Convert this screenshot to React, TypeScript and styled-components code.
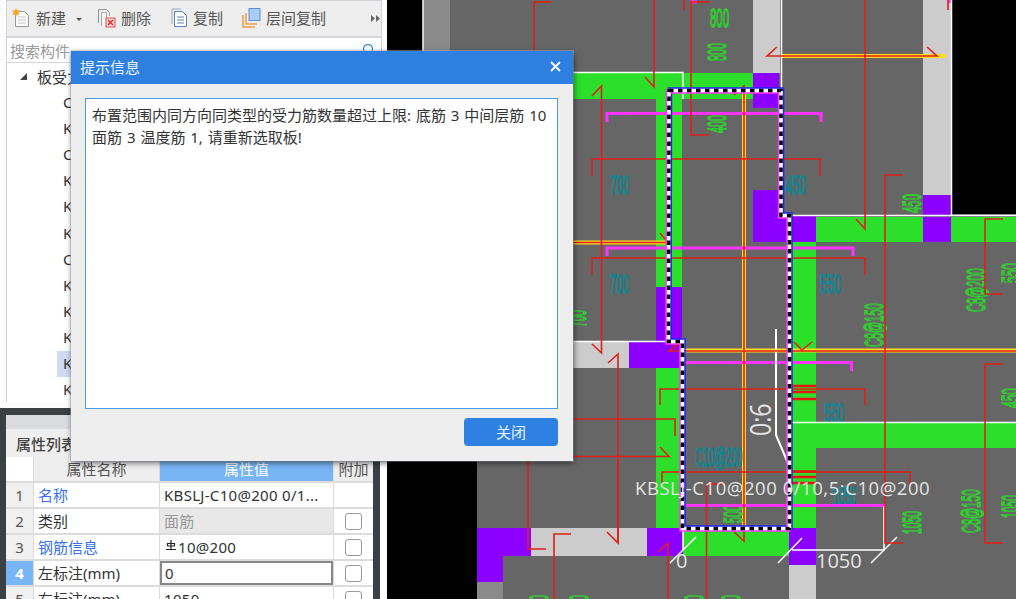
import React from "react";
import styled, { createGlobalStyle } from "styled-components";

const Global = createGlobalStyle`
  html, body { margin: 0; padding: 0; background: #000; }
  body { font-family: "Noto Sans", "Noto Sans CJK SC", sans-serif; font-size: 15px; color: #333; }
`;

const Page = styled.div`
  position: relative;
  display: flex;
  width: 1016px;
  height: 599px;
  overflow: hidden;
`;

const Side = styled.div`
  display: flex;
  flex-direction: column;
  width: 387px;
  flex: none;
  background: #fdfdfd;
`;

const ListPanel = styled.section`
  display: flex;
  flex-direction: column;
  height: 402px;
  margin: 0 5px 6px 6px;
  border: 1px solid #cfd2d6;
  border-bottom: 0;
  box-sizing: border-box;
  background: #fff;
  overflow: hidden;
`;

const Toolbar = styled.div`
  display: flex;
  align-items: center;
  height: 37px;
  flex: none;
  padding-left: 5px;
  background: #eeeeee;
  border-bottom: 2px solid #d3d5d8;
  box-sizing: border-box;
`;

const ToolButton = styled.div<{ $w: number }>`
  display: flex;
  align-items: center;
  gap: 5px;
  width: ${(p) => p.$w}px;
  flex: none;
  color: #555;
  white-space: nowrap;
  padding-bottom: 2px;
  box-sizing: border-box;
`;

const Caret = styled.span`
  width: 0;
  height: 0;
  margin-left: 5px;
  margin-top: 3px;
  border-left: 3.5px solid transparent;
  border-right: 3.5px solid transparent;
  border-top: 3.5px solid #555;
`;

const More = styled.svg`
  display: block;
  margin-left: auto;
  margin-right: 1px;
  flex: none;
`;

const SearchRow = styled.div`
  display: flex;
  align-items: center;
  justify-content: space-between;
  height: 24px;
  flex: none;
  padding: 0 6px 0 3px;
  border-bottom: 1px solid #d3d5d8;
  color: #9a9a9a;
`;

const Tree = styled.div`
  display: flex;
  flex-direction: column;
  padding-top: 1px;
`;

const TreeRoot = styled.div`
  display: flex;
  align-items: center;
  height: 26px;
  padding: 0 0 2px 13px;
  box-sizing: border-box;
  gap: 10px;
  color: #333;
  white-space: nowrap;
`;

const Triangle = styled.span`
  width: 0;
  height: 0;
  border-bottom: 7px solid #444;
  border-left: 7px solid transparent;
`;

const TreeItem = styled.div<{ $sel?: boolean }>`
  display: flex;
  align-items: center;
  height: 26.1px;
  margin-left: 50px;
  padding: 0 0 2px 6px;
  box-sizing: border-box;
  color: #333;
  background: ${(p) => (p.$sel ? "#cddcf0" : "transparent")};
`;

const PropPanel = styled.section`
  flex: 1;
  display: flex;
  flex-direction: column;
  margin-right: 7px;
  border: solid #3b4043;
  border-width: 7px 7px 0 6px;
  background: #fff;
  overflow: hidden;
  min-height: 0;
`;

const Grip = styled.div`
  height: 14px;
  flex: none;
  background: #d9dbdd;
`;

const TabBar = styled.div`
  display: flex;
  align-items: center;
  height: 28px;
  flex: none;
  padding-left: 10px;
  background: #eeeeee;
  font-weight: 500;
  color: #444;
`;

const Table = styled.div`
  display: grid;
  grid-template-columns: 27px 125px 173px 39px;
  grid-auto-rows: 24px;
  column-gap: 1px;
  row-gap: 2px;
  background: #dcdcdc;
`;

const Blank = styled.div`
  background: #fff;
`;

const Head = styled.div<{ $active?: boolean }>`
  display: flex;
  align-items: center;
  justify-content: center;
  overflow: hidden;
  white-space: nowrap;
  padding-bottom: 1px;
  box-sizing: border-box;
  background: ${(p) => (p.$active ? "#78b5f5" : "#eeeeee")};
  color: ${(p) => (p.$active ? "#fff" : "#555")};
`;

const Num = styled.div<{ $active?: boolean }>`
  display: flex;
  align-items: center;
  justify-content: center;
  padding-bottom: 1px;
  box-sizing: border-box;
  background: ${(p) => (p.$active ? "#78b5f5" : "#f0f0f0")};
  color: ${(p) => (p.$active ? "#fff" : "#555")};
  font-weight: ${(p) => (p.$active ? 700 : 400)};
`;

const NameCell = styled.div<{ $link?: boolean }>`
  display: flex;
  align-items: center;
  padding: 0 0 1px 4px;
  box-sizing: border-box;
  background: #fff;
  color: ${(p) => (p.$link ? "#3a6ff0" : "#333")};
`;

const ValueCell = styled.div<{ $ro?: boolean; $focus?: boolean }>`
  display: flex;
  align-items: center;
  padding: 0 0 1px ${(p) => (p.$focus ? 3 : 4)}px;
  box-sizing: border-box;
  overflow: hidden;
  white-space: nowrap;
  letter-spacing: 0.3px;
  background: ${(p) => (p.$ro ? "#e8e8e8" : "#fff")};
  color: ${(p) => (p.$ro ? "#999" : "#333")};
  border: ${(p) => (p.$focus ? "2px solid #888" : "0")};
`;

const RebarMark = styled.svg`
  display: block;
  flex: none;
  margin: -3px 1px 0 1px;
`;

const CheckCell = styled.div`
  display: flex;
  align-items: center;
  justify-content: center;
  background: #fff;
`;

const Check = styled.span`
  width: 15px;
  height: 15px;
  border: 1px solid #999;
  border-radius: 3px;
  background: #fff;
`;

const Canvas = styled.svg`
  display: block;
  flex: none;
  width: 629px;
  height: 599px;
  background: #666;
`;

const Fill = styled.rect<{ $c: string }>`
  fill: ${(p) => p.$c};
`;

const Wire = styled.path<{ $c: string; $w?: number }>`
  fill: none;
  stroke: ${(p) => p.$c};
  stroke-width: ${(p) => p.$w ?? 2}px;
`;

const CadText = styled.text<{ $c: string }>`
  font-family: "Liberation Sans", sans-serif;
  font-size: 26px;
  fill: none;
  stroke: ${(p) => p.$c};
  stroke-width: 1px;
  vector-effect: non-scaling-stroke;
`;

const Label = styled.text<{ $size: number }>`
  font-family: "Open Sans", "Liberation Sans", sans-serif;
  font-size: ${(p) => p.$size}px;
  fill: #e4e4e4;
`;

const Dialog = styled.div`
  position: absolute;
  left: 71px;
  top: 51px;
  width: 502px;
  height: 410px;
  display: flex;
  flex-direction: column;
  background: #eeeeee;
  box-shadow: 1px 2px 6px rgba(0, 0, 0, 0.55), 0 0 0 1px rgba(190, 200, 220, 0.5);
`;

const DialogTitle = styled.div`
  display: flex;
  align-items: center;
  justify-content: space-between;
  height: 33px;
  flex: none;
  padding: 0 12px 2px 9px;
  box-sizing: border-box;
  background: #2e7fe0;
  color: #eaf2fc;
`;

const MessageBox = styled.div`
  height: 311px;
  margin: 14px 15px 0 14px;
  padding: 5px 6px;
  box-sizing: border-box;
  background: #fff;
  border: 1px solid #4a9be0;
  line-height: 22px;
  word-spacing: 1px;
  color: #333;
`;

const DialogFoot = styled.div`
  display: flex;
  justify-content: flex-end;
  padding: 9px 15px 0 0;
`;

const CloseBtn = styled.div`
  display: flex;
  align-items: center;
  justify-content: center;
  width: 94px;
  height: 28px;
  padding-bottom: 1px;
  box-sizing: border-box;
  border-radius: 4px;
  background: #2e81e3;
  color: #e8f1fc;
`;

const NewIcon = () => (
  <svg width="19" height="20" viewBox="0 0 19 20">
    <path d="M3.5 3.5h9l4 4v11h-13z" fill="#fbfbfb" stroke="#9a9a9a" />
    <path d="M6 9h8M6 12h8M6 15h8" stroke="#c8c8c8" />
    <path d="M4 0l1 2.5 2.5-.5-1 2.500 1 2.500-2.500-.5-1 2.500-1-2.500-2.500.5 1-2.500-1-2.500 2.500.5z" fill="#f5a623" />
  </svg>
);
const DeleteIcon = () => (
  <svg width="19" height="20" viewBox="0 0 19 20">
    <path d="M1.500 15V1.500h8l3 3V8" fill="none" stroke="#9a9a9a" />
    <path d="M4.500 18V4.500h5v13" fill="#f6f6f6" stroke="#a8a8a8" />
    <rect x="9" y="10" width="9" height="9" fill="#f3d9d6" stroke="#d9534f" />
    <path d="M11 12l5 5M16 12l-5 5" stroke="#d9342b" strokeWidth="1.500" />
  </svg>
);
const CopyIcon = () => (
  <svg width="17" height="20" viewBox="0 0 17 20">
    <path d="M1 16V1h9" fill="none" stroke="#8faac8" />
    <path d="M3.500 3.500h8l4 4v11h-12z" fill="#fdfdfd" stroke="#5f83ad" />
    <path d="M6 9h7M6 12h7M6 15h7" stroke="#5f83ad" />
  </svg>
);
const FloorCopyIcon = () => (
  <svg width="19" height="20" viewBox="0 0 19 20">
    <path d="M1 7v12h12" fill="none" stroke="#f29a4c" strokeWidth="1.500" />
    <path d="M4 5v11h11" fill="none" stroke="#f29a4c" strokeWidth="1.500" />
    <rect x="7" y="0.500" width="11" height="12" fill="#a9cdf5" stroke="#5b8fd0" />
  </svg>
);
const SearchIcon = () => (
  <svg width="14" height="14" viewBox="0 0 14 14">
    <circle cx="7" cy="6" r="4.500" fill="none" stroke="#4a90d9" strokeWidth="1.500" />
  </svg>
);
const CloseIcon = () => (
  <svg width="11" height="11" viewBox="0 0 11 11">
    <path d="M1 1l9 9M10 1l-9 9" stroke="#fff" strokeWidth="1.800" />
  </svg>
);

const fills: [number, number, number, number, string][] = [
  [387, 0, 36, 200, "#000"],
  [387, 200, 90, 399, "#000"],
  [952, 0, 64, 214, "#000"],
  [424, 0, 26, 60, "#8a8a8a"],
  [477, 582, 26, 17, "#8a8a8a"],
  [573, 73, 180, 26, "#2bdf2b"],
  [656, 99, 26, 188, "#2bdf2b"],
  [656, 368, 27, 160, "#2bdf2b"],
  [792, 242, 24, 286, "#2bdf2b"],
  [816, 217, 107, 25, "#2bdf2b"],
  [951, 217, 65, 25, "#2bdf2b"],
  [792, 422, 224, 26, "#2bdf2b"],
  [683, 528, 106, 28, "#2bdf2b"],
  [753, 73, 26, 35, "#8b00ff"],
  [753, 190, 28, 25, "#8b00ff"],
  [753, 215, 63, 27, "#8b00ff"],
  [923, 217, 28, 25, "#8b00ff"],
  [923, 195, 28, 20, "#8b00ff"],
  [656, 287, 26, 55, "#8b00ff"],
  [629, 342, 53, 26, "#8b00ff"],
  [477, 528, 54, 28, "#8b00ff"],
  [477, 556, 26, 26, "#8b00ff"],
  [647, 528, 36, 28, "#8b00ff"],
  [789, 528, 27, 37, "#8b00ff"],
  [753, 0, 27, 73, "#cccccc"],
  [923, 0, 28, 195, "#cccccc"],
  [573, 342, 56, 26, "#cccccc"],
  [531, 528, 116, 28, "#cccccc"],
  [789, 565, 27, 34, "#cccccc"],
];

const whites = [
  "M423 0V60",
  "M573 72.500H683V99",
  "M781.500 0V215.500H1016",
  "M951.500 0V215",
  "M573 341.500H683",
  "M792 422.500H1016",
  "M884 506V550H792",
  "M683 530V550",
  "M670 563L696 537M778 563L802 538M871 563L897 537",
];

const leader = "M776 329V435L790 468";

const yellows = ["M782 56H946", "M573 242.500H668", "M683 350.500H1016", "M744 93V530"];

const pinks = [
  "M607 122V113.500H821V122",
  "M607 256V248H853V256",
  "M685 362.500H851.500V371",
  "M685 505.500H884",
  "M693 0V2H697",
  "M950 0V3",
];

const reds = [
  "M654 0V87L645 77",
  "M592 96L601.500 86V353L592 344",
  "M709 135H691V2H709",
  "M684 0V10M948 0V10",
  "M534 51V2H551",
  "M528 461V549H546",
  "M571 534H554V599",
  "M618 461V543L607 532",
  "M777 47L767 56H937L927 47",
  "M865 0V229L856 219",
  "M903 175H885V543H903",
  "M1003 219H985V294H1003",
  "M1003 364H985V543H1003",
  "M592 176V159H820V176",
  "M592 275V258H865V275",
  "M660 405V389H865V405",
  "M573 419H675V436",
  "M573 456.500H669L660 447",
  "M608 363L618 354V543",
  "M658 552L668 543V599",
  "M723 484H706.500V599",
  "M734 95L744 86V541L734 532",
  "M662 484V472H910V490",
  "M573 242.500H668L660 233",
  "M681 342L669 351H1016",
  "M794 342L802 350L812 342",
];

const thickReds = [
  "M792 386H816M792 392H816M792 399H816",
  "M792 471.500H816M792 477H816M792 483H816",
];

const loop = "M669 90.500H781V215.500H789.500V528.500H682.500V341.500H668.500Z";

type Cad = { t: string; x: number; y: number; w: number; c: string; rot?: boolean };
const GREEN = "#22e022";
const TEAL = "#008c9a";
const cad: Cad[] = [
  { t: "800", x: 710, y: 27, w: 19, c: GREEN },
  { t: "800", x: 726, y: 61, w: 18, c: GREEN, rot: true },
  { t: "400", x: 726, y: 133, w: 18, c: GREEN, rot: true },
  { t: "700", x: 610, y: 194, w: 19, c: TEAL },
  { t: "450", x: 785, y: 194, w: 21, c: TEAL },
  { t: "700", x: 610, y: 293, w: 19, c: TEAL },
  { t: "550", x: 820, y: 293, w: 21, c: TEAL },
  { t: "450", x: 921, y: 213, w: 19, c: GREEN, rot: true },
  { t: "550", x: 1020, y: 283, w: 20, c: GREEN, rot: true },
  { t: "C8@200", x: 985, y: 312, w: 37, c: GREEN, rot: true },
  { t: "C8@150", x: 883, y: 347, w: 37, c: GREEN, rot: true },
  { t: "700", x: 586, y: 327, w: 17, c: GREEN, rot: true },
  { t: "C10@200", x: 695, y: 466, w: 41, c: TEAL },
  { t: "550", x: 824, y: 422, w: 20, c: TEAL },
  { t: "1050", x: 832, y: 505, w: 24, c: TEAL },
  { t: "500", x: 742, y: 523, w: 18, c: GREEN, rot: true },
  { t: "1050", x: 921, y: 534, w: 23, c: GREEN, rot: true },
  { t: "C8@150", x: 980, y: 533, w: 37, c: GREEN, rot: true },
  { t: "1050", x: 1020, y: 518, w: 23, c: GREEN, rot: true },
  { t: "450", x: 1020, y: 408, w: 20, c: GREEN, rot: true },
  { t: "800", x: 548, y: 613, w: 18, c: GREEN, rot: true },
  { t: "800", x: 588, y: 613, w: 18, c: GREEN, rot: true },
  { t: "800", x: 703, y: 613, w: 18, c: GREEN, rot: true },
  { t: "800", x: 740, y: 613, w: 18, c: GREEN, rot: true },
];

const cadTransform = (c: Cad) => {
  const natural = c.t.length * 14.5;
  const sx = (c.w / natural).toFixed(3);
  return `translate(${c.x} ${c.y})${c.rot ? " rotate(-90)" : ""} scale(${sx} 1)`;
};

const treeLetters = ["C", "K", "C", "K", "K", "K", "C", "K", "K", "K", "K", "K"];

type Row = {
  n: string;
  name: string;
  value: string;
  link?: boolean;
  ro?: boolean;
  focus?: boolean;
  active?: boolean;
  check: boolean;
  mark?: boolean;
};

const rows: Row[] = [
  { n: "1", name: "名称", link: true, value: "KBSLJ-C10@200 0/1...", check: false },
  { n: "2", name: "类别", value: "面筋", ro: true, check: true },
  { n: "3", name: "钢筋信息", link: true, value: "10@200", mark: true, check: true },
  { n: "4", name: "左标注(mm)", value: "0", focus: true, active: true, check: true },
  { n: "5", name: "右标注(mm)", value: "1050", check: true },
];

export default function App() {
  return (
    <Page>
      <Global />
      <Side>
        <ListPanel>
          <Toolbar>
            <ToolButton $w={85}><NewIcon /><span>新建</span><Caret /></ToolButton>
            <ToolButton $w={74}><DeleteIcon /><span>删除</span></ToolButton>
            <ToolButton $w={71}><CopyIcon /><span>复制</span></ToolButton>
            <ToolButton $w={100}><FloorCopyIcon /><span>层间复制</span></ToolButton>
            <More width="9" height="7" viewBox="0 0 9 7">
              <path d="M0 0l4 3.500L0 7zM5 0l4 3.500L5 7z" fill="#666" />
            </More>
          </Toolbar>
          <SearchRow>
            <span>搜索构件</span>
            <SearchIcon />
          </SearchRow>
          <Tree>
            <TreeRoot><Triangle /><span>板受力筋</span></TreeRoot>
            {treeLetters.map((l, i) => (
              <TreeItem key={i} $sel={i === 10}>{l}</TreeItem>
            ))}
          </Tree>
        </ListPanel>
        <PropPanel>
          <Grip />
          <TabBar>属性列表</TabBar>
          <Table>
            <Blank />
            <Head>属性名称</Head>
            <Head $active>属性值</Head>
            <Head>附加</Head>
            {rows.map((r) => (
              <React.Fragment key={r.n}>
                <Num $active={r.active}>{r.n}</Num>
                <NameCell $link={r.link}>{r.name}</NameCell>
                <ValueCell $ro={r.ro} $focus={r.focus}>
                  {r.mark && (
                    <RebarMark width="12" height="12" viewBox="0 0 12 12">
                      <path d="M6 1v9M1 10.500h10M2.500 7V4.500h7V7h-7" fill="none" stroke="#222" strokeWidth="1.200" />
                    </RebarMark>
                  )}
                  {r.value}
                </ValueCell>
                <CheckCell>{r.check && <Check />}</CheckCell>
              </React.Fragment>
            ))}
          </Table>
        </PropPanel>
      </Side>
      <Canvas viewBox="387 0 629 599">
        {fills.map(([x, y, w, h, c], i) => (
          <Fill key={i} x={x} y={y} width={w} height={h} $c={c} />
        ))}
        {yellows.map((d, i) => <Wire key={i} d={d} $c="#ffdc1f" $w={4} />)}
        {cad.map((c, i) => (
          <CadText key={i} transform={cadTransform(c)} $c={c.c} vectorEffect="non-scaling-stroke">{c.t}</CadText>
        ))}
        {pinks.map((d, i) => <Wire key={i} d={d} $c="#ff33ff" $w={3} />)}
        {whites.map((d, i) => <Wire key={i} d={d} $c="#ffffff" $w={1.5} />)}
        <Wire d={leader} $c="#ffffff" $w={2} />
        {reds.map((d, i) => <Wire key={i} d={d} $c="#e0201a" $w={1.6} />)}
        {thickReds.map((d, i) => <Wire key={i} d={d} $c="#e8140f" $w={2.5} />)}
        <g transform="translate(1 -1)"><Wire d={loop} $c="#2020ff" $w={4.5} /></g>
        <g transform="translate(-1 1)"><Wire d={loop} $c="#ff33ff" $w={4.5} /></g>
        <Wire d={loop} $c="#ffffff" $w={3.5} />
        <Wire d={loop} $c="#000000" $w={3.5} strokeDasharray="4.500 4.500" />
        <Label x={635} y={495} $size={18.500} letterSpacing="0.550">KBSLJ-C10@200 0/10,5:C10@200</Label>
        <Label x={676} y={568} $size={20}>0</Label>
        <Label x={816} y={568} $size={20}>1050</Label>
        <Label x={0} y={0} $size={29} transform="translate(771 436) rotate(-90) scale(0.8 1)">0:6</Label>
      </Canvas>
      <Dialog>
        <DialogTitle>
          <span>提示信息</span>
          <CloseIcon />
        </DialogTitle>
        <MessageBox>
          布置范围内同方向同类型的受力筋数量超过上限: 底筋 3 中间层筋 10 面筋 3 温度筋 1, 请重新选取板!
        </MessageBox>
        <DialogFoot>
          <CloseBtn>关闭</CloseBtn>
        </DialogFoot>
      </Dialog>
    </Page>
  );
}
